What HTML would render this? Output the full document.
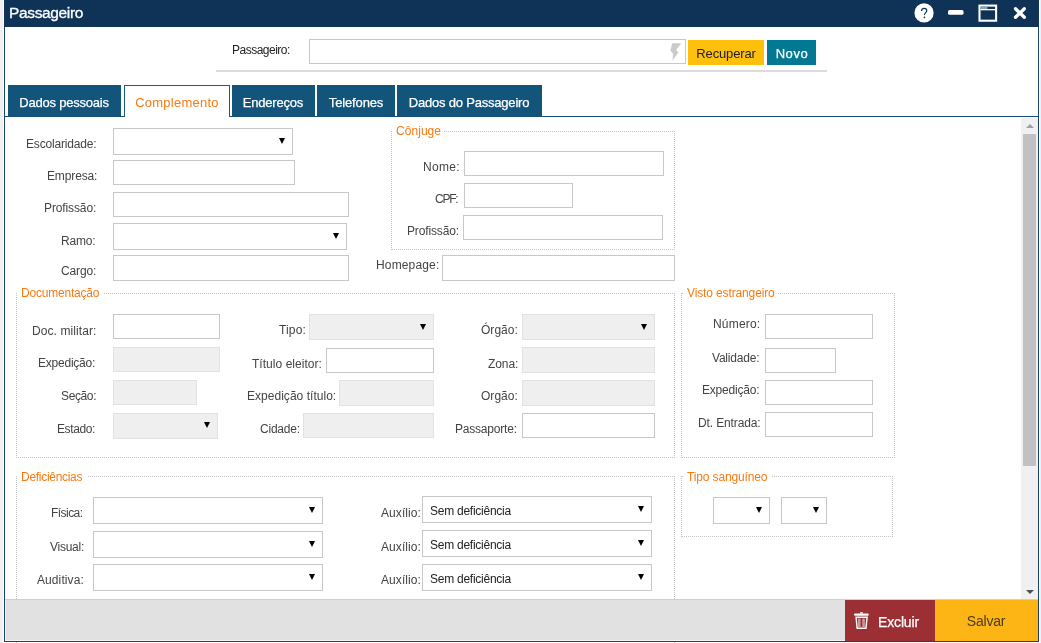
<!DOCTYPE html>
<html><head><meta charset="utf-8"><style>
html,body{margin:0;padding:0;}
body{width:1041px;height:643px;overflow:hidden;position:relative;background:#f0f0f0;font-family:"Liberation Sans",sans-serif;}
body>div{position:absolute;}
.t{white-space:nowrap;will-change:transform;}
.arr{width:0;height:0;border-left:3.5px solid transparent;border-right:3.5px solid transparent;border-top:6px solid #000;}
.up{width:0;height:0;border-left:4px solid transparent;border-right:4px solid transparent;border-bottom:4px solid #a0a0a0;}
.dn{width:0;height:0;border-left:4px solid transparent;border-right:4px solid transparent;border-top:4px solid #505050;}
</style></head><body>
<div style="left:3px;top:0px;width:1037px;height:643px;background:#fff"></div>
<div style="left:4px;top:0px;width:1035px;height:642px;box-sizing:border-box;border:1px solid #19436d;background:#fff"></div>
<div style="left:4px;top:0px;width:1035px;height:27px;background:#0f3356"></div>
<div class="t" style="left:8.7px;top:5px;font-size:15.5px;line-height:15.5px;color:#fff;letter-spacing:-0.35px;-webkit-text-stroke:0.3px #fff">Passageiro</div>
<svg style="position:absolute;left:905px;top:0px" width="134" height="27" viewBox="905 0 134 27">
<circle cx="924.05" cy="12.9" r="9.6" fill="#fff"/>
<path d="M921.5 10.9 C921.5 9.1 922.7 8.3 924.1 8.3 C925.7 8.3 926.8 9.2 926.8 10.6 C926.8 12.5 924.4 12.7 924.4 15.1" fill="none" stroke="#0f3356" stroke-width="1.2"/>
<circle cx="924.4" cy="17.3" r="0.85" fill="#0f3356"/>
<rect x="948" y="10" width="15.5" height="4.8" rx="1.6" fill="#fff"/>
<rect x="979.5" y="5.6" width="16.6" height="15.1" fill="none" stroke="#fff" stroke-width="2.1"/>
<rect x="980.5" y="9" width="15" height="1.3" fill="#fff"/>
<rect x="981" y="6.6" width="6.5" height="2.4" fill="#8ea0b4"/>
<path d="M1015.5 8.7 L1024.3 17.3 M1024.3 8.7 L1015.5 17.3" stroke="#fff" stroke-width="3.3" stroke-linecap="round"/>
</svg>
<div class="t" style="left:231.62px;top:44px;font-size:12px;line-height:12px;color:#222;letter-spacing:-0.506px">Passageiro:</div>
<div style="left:309px;top:39px;width:377px;height:25px;box-sizing:border-box;border:1px solid #c8c8c8;background:#fff"></div>
<svg style="position:absolute;left:662px;top:38px" width="28" height="28" viewBox="0 0 28 28">
<path d="M10.2 5.2 L19.2 5.2 L14.2 12 L16.4 14.4 L10.6 22.6 L10.9 15.2 L8.4 12.8 Z" fill="#cacaca"/></svg>
<div style="left:688px;top:40px;width:76px;height:25px;background:#ffc00d"></div>
<div class="t" style="left:575.5px;width:300px;text-align:center;top:47px;font-size:13px;line-height:13px;color:#222;letter-spacing:-0.15px;">Recuperar</div>
<div style="left:767px;top:40px;width:49px;height:25px;background:#037893"></div>
<div class="t" style="left:641.5px;width:300px;text-align:center;top:47px;font-size:13px;line-height:13px;color:#fff;letter-spacing:0.6px;-webkit-text-stroke:0.25px #fff">Novo</div>
<div style="left:216px;top:70px;width:611px;height:2px;background:#dcdcdc"></div>
<div style="left:5px;top:116px;width:1033px;height:1px;background:#134f77"></div>
<div style="left:8px;top:85px;width:113px;height:31px;background:#13547a"></div>
<div class="t" style="left:-85.7px;width:300px;text-align:center;top:96px;font-size:13px;line-height:13px;color:#fff;letter-spacing:-0.22px;-webkit-text-stroke:0.25px #fff">Dados pessoais</div>
<div style="left:124px;top:85px;width:106px;height:32px;box-sizing:border-box;border:1px solid #1b5a82;border-bottom:none;background:#fff"></div>
<div style="left:125px;top:116px;width:104px;height:1px;background:#fff"></div>
<div class="t" style="left:26.599999999999994px;width:300px;text-align:center;top:96px;font-size:13px;line-height:13px;color:#f97a12;letter-spacing:0.25px;">Complemento</div>
<div style="left:232px;top:85px;width:83px;height:31px;background:#13547a"></div>
<div class="t" style="left:122.89999999999998px;width:300px;text-align:center;top:96px;font-size:13px;line-height:13px;color:#fff;letter-spacing:-0.2px;-webkit-text-stroke:0.25px #fff">Endereços</div>
<div style="left:317px;top:85px;width:78px;height:31px;background:#13547a"></div>
<div class="t" style="left:205.89999999999998px;width:300px;text-align:center;top:96px;font-size:13px;line-height:13px;color:#fff;letter-spacing:-0.15px;-webkit-text-stroke:0.25px #fff">Telefones</div>
<div style="left:397px;top:85px;width:145px;height:31px;background:#13547a"></div>
<div class="t" style="left:319.1px;width:300px;text-align:center;top:96px;font-size:13px;line-height:13px;color:#fff;letter-spacing:-0.2px;-webkit-text-stroke:0.25px #fff">Dados do Passageiro</div>
<div style="left:1021px;top:118px;width:17px;height:482px;background:#f0f0f0"></div>
<div style="left:1023px;top:134px;width:13px;height:332px;background:#c1c1c1"></div>
<div class="up" style="left:1026px;top:124px"></div>
<div class="dn" style="left:1026px;top:590px"></div>
<div class="t" style="left:26.34px;top:138px;font-size:12px;line-height:12px;color:#444444;letter-spacing:-0.168px">Escolaridade:</div>
<div style="left:113px;top:128px;width:180px;height:27px;box-sizing:border-box;border:1px solid #c8c8c8;background:#fff"></div>
<div class="arr" style="left:279px;top:138px"></div>
<div class="t" style="left:46.70px;top:170px;font-size:12px;line-height:12px;color:#444444;letter-spacing:-0.136px">Empresa:</div>
<div style="left:113px;top:160px;width:182px;height:25px;box-sizing:border-box;border:1px solid #c8c8c8;background:#fff"></div>
<div class="t" style="left:43.98px;top:202px;font-size:12px;line-height:12px;color:#444444;letter-spacing:-0.120px">Profissão:</div>
<div style="left:113px;top:192px;width:236px;height:25px;box-sizing:border-box;border:1px solid #c8c8c8;background:#fff"></div>
<div class="t" style="left:61.34px;top:235px;font-size:12px;line-height:12px;color:#444444;letter-spacing:-0.210px">Ramo:</div>
<div style="left:113px;top:223px;width:234px;height:27px;box-sizing:border-box;border:1px solid #c8c8c8;background:#fff"></div>
<div class="arr" style="left:333px;top:233px"></div>
<div class="t" style="left:60.86px;top:265px;font-size:12px;line-height:12px;color:#444444;letter-spacing:-0.122px">Cargo:</div>
<div style="left:113px;top:255px;width:236px;height:26px;box-sizing:border-box;border:1px solid #c8c8c8;background:#fff"></div>
<div style="left:391px;top:131px;width:284px;height:119px;box-sizing:border-box;border:1px dotted #c4c4c4;"></div>
<div class="t" style="left:396.2px;top:125px;font-size:12px;line-height:12px;color:#f97a12;letter-spacing:0.05px;background:linear-gradient(#fff,#fff) no-repeat 0.8px 6px/100% 1px;padding:0 2.75px 0 5px;margin-left:-5px">Cônjuge</div>
<div class="t" style="left:422.70px;top:161px;font-size:12px;line-height:12px;color:#444444;letter-spacing:0.310px">Nome:</div>
<div style="left:464px;top:151px;width:200px;height:25px;box-sizing:border-box;border:1px solid #c8c8c8;background:#fff"></div>
<div class="t" style="left:435.28px;top:193px;font-size:12px;line-height:12px;color:#444444;letter-spacing:-1.262px">CPF:</div>
<div style="left:464px;top:183px;width:109px;height:25px;box-sizing:border-box;border:1px solid #c8c8c8;background:#fff"></div>
<div class="t" style="left:406.98px;top:225px;font-size:12px;line-height:12px;color:#444444;letter-spacing:-0.140px">Profissão:</div>
<div style="left:463px;top:215px;width:200px;height:25px;box-sizing:border-box;border:1px solid #c8c8c8;background:#fff"></div>
<div class="t" style="left:375.56px;top:259px;font-size:12px;line-height:12px;color:#444444;letter-spacing:0.150px">Homepage:</div>
<div style="left:442px;top:255px;width:233px;height:26px;box-sizing:border-box;border:1px solid #c8c8c8;background:#fff"></div>
<div style="left:16px;top:293px;width:659px;height:165px;box-sizing:border-box;border:1px dotted #c4c4c4;"></div>
<div class="t" style="left:21.3px;top:287px;font-size:12px;line-height:12px;color:#f97a12;letter-spacing:-0.2px;background:linear-gradient(#fff,#fff) no-repeat 0.8px 6px/100% 1px;padding:0 4.00px 0 5px;margin-left:-5px">Documentação</div>
<div class="t" style="left:31.70px;top:325px;font-size:12px;line-height:12px;color:#444444;letter-spacing:0.083px">Doc. militar:</div>
<div style="left:113px;top:314px;width:107px;height:25px;box-sizing:border-box;border:1px solid #c8c8c8;background:#fff"></div>
<div class="t" style="left:38.20px;top:357px;font-size:12px;line-height:12px;color:#444444;letter-spacing:-0.229px">Expedição:</div>
<div style="left:113px;top:347px;width:107px;height:25px;box-sizing:border-box;border:1px solid #e2e2e2;background:#efefef"></div>
<div class="t" style="left:61.48px;top:390px;font-size:12px;line-height:12px;color:#444444;letter-spacing:-0.378px">Seção:</div>
<div style="left:113px;top:380px;width:84px;height:25px;box-sizing:border-box;border:1px solid #e2e2e2;background:#efefef"></div>
<div class="t" style="left:57.22px;top:423px;font-size:12px;line-height:12px;color:#444444;letter-spacing:-0.383px">Estado:</div>
<div style="left:113px;top:413px;width:105px;height:26px;box-sizing:border-box;border:1px solid #e2e2e2;background:#efefef"></div>
<div class="arr" style="left:204px;top:422px"></div>
<div class="t" style="left:278.72px;top:324px;font-size:12px;line-height:12px;color:#444444;letter-spacing:0.150px">Tipo:</div>
<div style="left:309px;top:314px;width:125px;height:26px;box-sizing:border-box;border:1px solid #e2e2e2;background:#efefef"></div>
<div class="arr" style="left:420px;top:324px"></div>
<div class="t" style="left:252.00px;top:358px;font-size:12px;line-height:12px;color:#444444;letter-spacing:0.042px">Título eleitor:</div>
<div style="left:326px;top:348px;width:108px;height:25px;box-sizing:border-box;border:1px solid #c8c8c8;background:#fff"></div>
<div class="t" style="left:247.12px;top:390px;font-size:12px;line-height:12px;color:#444444;letter-spacing:0.030px">Expedição título:</div>
<div style="left:339px;top:380px;width:95px;height:26px;box-sizing:border-box;border:1px solid #e2e2e2;background:#efefef"></div>
<div class="t" style="left:260.36px;top:423px;font-size:12px;line-height:12px;color:#444444;letter-spacing:-0.222px">Cidade:</div>
<div style="left:303px;top:413px;width:131px;height:25px;box-sizing:border-box;border:1px solid #e2e2e2;background:#efefef"></div>
<div class="t" style="left:481.00px;top:324px;font-size:12px;line-height:12px;color:#444444;letter-spacing:0.038px">Órgão:</div>
<div style="left:522px;top:314px;width:133px;height:26px;box-sizing:border-box;border:1px solid #e2e2e2;background:#efefef"></div>
<div class="arr" style="left:641px;top:324px"></div>
<div class="t" style="left:487.50px;top:358px;font-size:12px;line-height:12px;color:#444444;letter-spacing:-0.090px">Zona:</div>
<div style="left:522px;top:347px;width:133px;height:26px;box-sizing:border-box;border:1px solid #e2e2e2;background:#efefef"></div>
<div class="t" style="left:481.00px;top:390px;font-size:12px;line-height:12px;color:#444444;letter-spacing:0.038px">Orgão:</div>
<div style="left:522px;top:380px;width:133px;height:26px;box-sizing:border-box;border:1px solid #e2e2e2;background:#efefef"></div>
<div class="t" style="left:455.26px;top:423px;font-size:12px;line-height:12px;color:#444444;letter-spacing:-0.202px">Passaporte:</div>
<div style="left:522px;top:413px;width:133px;height:25px;box-sizing:border-box;border:1px solid #c8c8c8;background:#fff"></div>
<div style="left:681px;top:293px;width:214px;height:165px;box-sizing:border-box;border:1px dotted #c4c4c4;"></div>
<div class="t" style="left:687px;top:287px;font-size:12px;line-height:12px;color:#f97a12;letter-spacing:-0.13px;background:linear-gradient(#fff,#fff) no-repeat 0.8px 6px/100% 1px;padding:0 3.65px 0 5px;margin-left:-5px">Visto estrangeiro</div>
<div class="t" style="left:712.62px;top:318px;font-size:12px;line-height:12px;color:#444444;letter-spacing:0.180px">Número:</div>
<div style="left:765px;top:314px;width:108px;height:25px;box-sizing:border-box;border:1px solid #c8c8c8;background:#fff"></div>
<div class="t" style="left:712.36px;top:352px;font-size:12px;line-height:12px;color:#444444;letter-spacing:-0.210px">Validade:</div>
<div style="left:765px;top:348px;width:71px;height:25px;box-sizing:border-box;border:1px solid #c8c8c8;background:#fff"></div>
<div class="t" style="left:702.26px;top:384px;font-size:12px;line-height:12px;color:#444444;letter-spacing:-0.208px">Expedição:</div>
<div style="left:765px;top:380px;width:108px;height:25px;box-sizing:border-box;border:1px solid #c8c8c8;background:#fff"></div>
<div class="t" style="left:697.70px;top:417px;font-size:12px;line-height:12px;color:#444444;letter-spacing:-0.130px">Dt. Entrada:</div>
<div style="left:765px;top:412px;width:108px;height:25px;box-sizing:border-box;border:1px solid #c8c8c8;background:#fff"></div>
<div style="left:16px;top:476px;width:659px;height:225px;box-sizing:border-box;border:1px dotted #c4c4c4;border-bottom:none;"></div>
<div class="t" style="left:21.3px;top:471px;font-size:12px;line-height:12px;color:#f97a12;letter-spacing:-0.29px;background:linear-gradient(#fff,#fff) no-repeat 0.8px 5px/100% 1px;padding:0 4.45px 0 5px;margin-left:-5px">Deficiências</div>
<div class="t" style="left:51.48px;top:507px;font-size:12px;line-height:12px;color:#444444;letter-spacing:-0.542px">Física:</div>
<div style="left:93px;top:497px;width:230px;height:27px;box-sizing:border-box;border:1px solid #c8c8c8;background:#fff"></div>
<div class="arr" style="left:309px;top:507px"></div>
<div class="t" style="left:49.72px;top:541px;font-size:12px;line-height:12px;color:#444444;letter-spacing:-0.251px">Visual:</div>
<div style="left:93px;top:531px;width:230px;height:27px;box-sizing:border-box;border:1px solid #c8c8c8;background:#fff"></div>
<div class="arr" style="left:309px;top:541px"></div>
<div class="t" style="left:37.00px;top:574px;font-size:12px;line-height:12px;color:#444444;letter-spacing:0.090px">Auditiva:</div>
<div style="left:93px;top:564px;width:230px;height:27px;box-sizing:border-box;border:1px solid #c8c8c8;background:#fff"></div>
<div class="arr" style="left:309px;top:574px"></div>
<div class="t" style="left:380.64px;top:507px;font-size:12px;line-height:12px;color:#444444;letter-spacing:0.067px">Auxílio:</div>
<div style="left:422px;top:496px;width:230px;height:27px;box-sizing:border-box;border:1px solid #c8c8c8;background:#fff"></div>
<div class="arr" style="left:638px;top:506px"></div>
<div class="t" style="left:430px;top:505px;font-size:12px;line-height:12px;color:#222;letter-spacing:-0.25px;">Sem deficiência</div>
<div class="t" style="left:380.64px;top:541px;font-size:12px;line-height:12px;color:#444444;letter-spacing:0.067px">Auxílio:</div>
<div style="left:422px;top:530px;width:230px;height:27px;box-sizing:border-box;border:1px solid #c8c8c8;background:#fff"></div>
<div class="arr" style="left:638px;top:540px"></div>
<div class="t" style="left:430px;top:539px;font-size:12px;line-height:12px;color:#222;letter-spacing:-0.25px;">Sem deficiência</div>
<div class="t" style="left:380.64px;top:574px;font-size:12px;line-height:12px;color:#444444;letter-spacing:0.067px">Auxílio:</div>
<div style="left:422px;top:564px;width:230px;height:27px;box-sizing:border-box;border:1px solid #c8c8c8;background:#fff"></div>
<div class="arr" style="left:638px;top:574px"></div>
<div class="t" style="left:430px;top:573px;font-size:12px;line-height:12px;color:#222;letter-spacing:-0.25px;">Sem deficiência</div>
<div style="left:681px;top:476px;width:212px;height:61px;box-sizing:border-box;border:1px dotted #c4c4c4;"></div>
<div class="t" style="left:687px;top:471px;font-size:12px;line-height:12px;color:#f97a12;letter-spacing:-0.14px;background:linear-gradient(#fff,#fff) no-repeat 0.8px 5px/100% 1px;padding:0 3.70px 0 5px;margin-left:-5px">Tipo sanguíneo</div>
<div style="left:713px;top:497px;width:57px;height:27px;box-sizing:border-box;border:1px solid #c8c8c8;background:#fff"></div>
<div class="arr" style="left:756px;top:507px"></div>
<div style="left:781px;top:497px;width:46px;height:27px;box-sizing:border-box;border:1px solid #c8c8c8;background:#fff"></div>
<div class="arr" style="left:813px;top:507px"></div>
<div style="left:5px;top:599px;width:1033px;height:1px;background:#cfcfcf"></div>
<div style="left:5px;top:600px;width:1033px;height:41px;background:#f6f6f6"></div>
<div style="left:6px;top:600px;width:1032px;height:40px;background:#e1e1e1"></div>
<div style="left:845px;top:600px;width:90px;height:41px;background:#9b2f33"></div>
<div style="left:935px;top:600px;width:103px;height:41px;background:#fdb515"></div>
<svg style="position:absolute;left:853px;top:611px" width="17" height="19" viewBox="0 0 17 19">
<path d="M6.9 2.6 L7.3 1.3 H9.7 L10.1 2.6 Z" fill="#fff"/>
<rect x="1.1" y="2.4" width="14.6" height="2.3" rx="0.9" fill="#fff"/>
<path d="M2.3 5.6 H14.9 L13.6 17.9 H3.5 Z" fill="#fff"/>
<path d="M3.9 6.9 H13.3 L12.3 16.6 H4.8 Z" fill="#9b2f33"/>
<rect x="5.0" y="7.6" width="2.6" height="8.4" fill="#fff" opacity="0.5"/>
<rect x="9.3" y="7.6" width="2.6" height="8.4" fill="#fff" opacity="0.5"/>
</svg>
<div class="t" style="left:877.5px;top:615px;font-size:14px;line-height:14px;color:#fff;letter-spacing:-0.15px;-webkit-text-stroke:0.25px #fff">Excluir</div>
<div class="t" style="left:836px;width:300px;text-align:center;top:614px;font-size:14px;line-height:14px;color:#4a3d1c;letter-spacing:-0.2px;">Salvar</div>
</body></html>
